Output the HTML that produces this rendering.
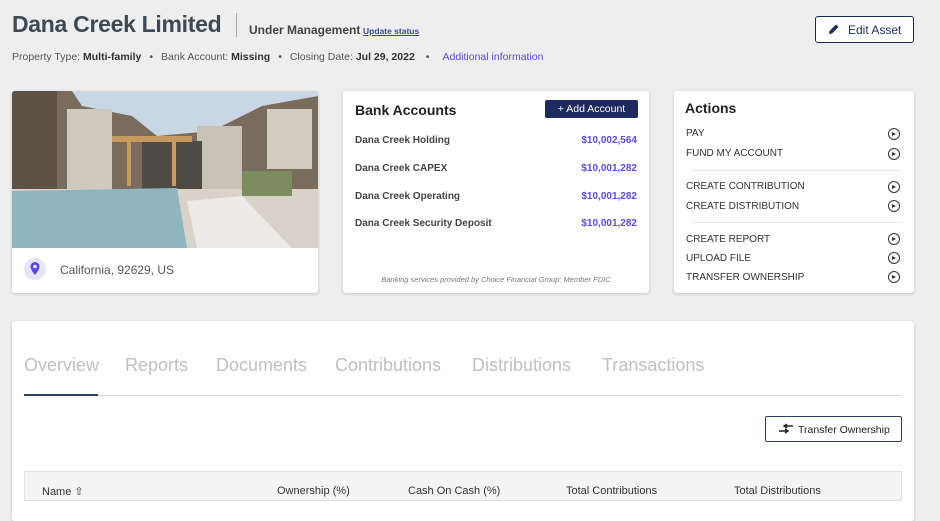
<!DOCTYPE html>
<html><head><style>
*{margin:0;padding:0;box-sizing:border-box}
body{width:940px;height:492px;overflow:hidden;background:#eeeeee;font-family:"Liberation Sans",sans-serif;position:relative;color:#333}
.a{position:absolute;white-space:nowrap}
.card{position:absolute;background:#fff;border-radius:3px;box-shadow:0 1px 3px rgba(0,0,0,.18)}
.ba{position:absolute;left:12px;font-size:10px;font-weight:bold;color:#444}
.amt{position:absolute;right:12px;font-size:10px;font-weight:bold;color:#5a4be0}
.act{position:absolute;left:12px;font-size:10px;color:#333}
.ic{position:absolute;right:14px;width:12px;height:12px;border:1.3px solid #333;border-radius:50%}
.ic:after{content:"";position:absolute;left:3px;top:3px;border-left:4px solid #333;border-top:2.2px solid transparent;border-bottom:2.2px solid transparent}
.sep{position:absolute;left:18px;right:12px;height:1px;background:#e6e6e6}
.tab{position:absolute;top:355px;font-size:18px;color:#c0c0c0}
</style></head><body>
<div class="a" style="left:12px;top:11px;font-size:23px;font-weight:bold;color:#3d4a55;letter-spacing:-0.3px">Dana Creek Limited</div>
<div class="a" style="left:236px;top:13px;width:1px;height:24px;background:#aaa"></div>
<div class="a" style="left:249px;top:23px;font-size:12px;font-weight:bold;color:#444">Under Management</div>
<div class="a" style="left:363px;top:26px;font-size:8.5px;font-weight:bold;color:#3a4a9a;text-decoration:underline">Update status</div>
<div class="a" style="left:12px;top:51px;font-size:10.5px;color:#555">Property Type: <b style="color:#333">Multi-family</b><span style="margin:0 8px">•</span>Bank Account: <b style="color:#333">Missing</b><span style="margin:0 8px">•</span>Closing Date: <b style="color:#333">Jul 29, 2022</b><span style="margin:0 13px 0 11px">•</span><span style="color:#5a4be0">Additional information</span></div>
<div class="a" style="left:815px;top:16px;width:99px;height:27px;border:1px solid #1e2a55;border-radius:3px;background:#fff;font-size:12px;color:#1e2a55;padding:6px 0 0 32px">Edit Asset</div>
<svg class="a" style="left:828px;top:23px" width="12" height="12" viewBox="0 0 12 12"><path d="M1 11l.5-3L8 1.5l2.5 2.5L4 10.5z" fill="#1e2a55"/></svg>

<div class="card" style="left:12px;top:91px;width:306px;height:202px;overflow:hidden">
<svg width="306" height="157" viewBox="0 0 306 157">
<rect width="306" height="157" fill="#c9d6e4"/>
<polygon points="0,0 60,0 70,15 120,25 145,45 200,40 250,15 306,5 306,110 0,110" fill="#7a6c5c"/>
<rect x="55" y="18" width="45" height="80" fill="#cfc9be"/>
<rect x="185" y="35" width="45" height="65" fill="#c8c1b5"/>
<rect x="255" y="18" width="45" height="60" fill="#d2ccc0"/>
<rect x="0" y="0" width="45" height="105" fill="#5e5246"/>
<rect x="130" y="50" width="60" height="50" fill="#4e4a44"/>
<rect x="100" y="45" width="80" height="6" fill="#c89a60"/>
<rect x="115" y="50" width="4" height="45" fill="#c89a60"/><rect x="160" y="50" width="4" height="45" fill="#c89a60"/>
<rect x="0" y="98" width="306" height="59" fill="#d8d2c8"/>
<rect x="230" y="80" width="50" height="25" fill="#7d8c5e"/>
<polygon points="0,100 165,97 175,157 0,157" fill="#8fb5bf"/>
<polygon points="175,110 230,105 280,157 185,157" fill="#eceae6"/>
</svg>
<div class="a" style="left:12px;top:167px;width:22px;height:22px;border-radius:50%;background:#e6e4f5"></div>
<svg class="a" style="left:18px;top:171px" width="10" height="13" viewBox="0 0 10 13"><path d="M5 0a4.5 4.5 0 0 0-4.5 4.5C.5 8 5 13 5 13s4.5-5 4.5-8.5A4.5 4.5 0 0 0 5 0zm0 6.3a1.8 1.8 0 1 1 0-3.6 1.8 1.8 0 0 1 0 3.6z" fill="#5a4be0"/></svg>
<div class="a" style="left:48px;top:172px;font-size:12px;color:#555">California, 92629, US</div>
</div>

<div class="card" style="left:343px;top:91px;width:306px;height:202px">
<div class="a" style="left:12px;top:11px;font-size:14px;font-weight:bold;color:#222">Bank Accounts</div>
<div class="a" style="left:202px;top:9px;width:93px;height:18px;background:#1e2a5e;border-radius:2px;color:#fff;font-size:10.5px;text-align:center;line-height:18px">+ Add Account</div>
<div class="ba" style="top:44px">Dana Creek Holding</div><div class="amt" style="top:44px">$10,002,564</div>
<div class="ba" style="top:72px">Dana Creek CAPEX</div><div class="amt" style="top:72px">$10,001,282</div>
<div class="ba" style="top:100px">Dana Creek Operating</div><div class="amt" style="top:100px">$10,001,282</div>
<div class="ba" style="top:127px">Dana Creek Security Deposit</div><div class="amt" style="top:127px">$10,001,282</div>
<div class="a" style="left:0;width:306px;top:184px;font-size:7.5px;font-style:italic;color:#777;text-align:center">Banking services provided by Choice Financial Group; Member FDIC</div>
</div>

<div class="card" style="left:674px;top:91px;width:240px;height:202px">
<div class="a" style="left:11px;top:9px;font-size:14px;font-weight:bold;color:#222">Actions</div>
<div class="act" style="top:37px">PAY</div><div class="ic" style="top:37px"></div>
<div class="act" style="top:57px">FUND MY ACCOUNT</div><div class="ic" style="top:57px"></div>
<div class="sep" style="top:79px"></div>
<div class="act" style="top:90px">CREATE CONTRIBUTION</div><div class="ic" style="top:90px"></div>
<div class="act" style="top:110px">CREATE DISTRIBUTION</div><div class="ic" style="top:109px"></div>
<div class="sep" style="top:131px"></div>
<div class="act" style="top:143px">CREATE REPORT</div><div class="ic" style="top:142px"></div>
<div class="act" style="top:162px">UPLOAD FILE</div><div class="ic" style="top:161px"></div>
<div class="act" style="top:181px">TRANSFER OWNERSHIP</div><div class="ic" style="top:180px"></div>
</div>

<div class="card" style="left:12px;top:321px;width:902px;height:200px"></div>
<div class="tab" style="left:24px">Overview</div>
<div class="tab" style="left:125px">Reports</div>
<div class="tab" style="left:216px">Documents</div>
<div class="tab" style="left:335px">Contributions</div>
<div class="tab" style="left:472px">Distributions</div>
<div class="tab" style="left:602px">Transactions</div>
<div class="a" style="left:24px;top:395px;width:878px;height:1px;background:#d8d8dc"></div>
<div class="a" style="left:24px;top:394px;width:74px;height:2px;background:#2e3f6e"></div>
<div class="a" style="left:765px;top:416px;width:137px;height:26px;border:1px solid #2e3f6e;border-radius:2px;font-size:10.5px;color:#222;padding:7px 0 0 32px">Transfer Ownership</div>
<svg class="a" style="left:778px;top:423px" width="16" height="11" viewBox="0 0 16 11"><path d="M6 3h9M9 1L6 3l3 2M1 8h9M7 6l3 2-3 2" stroke="#222" stroke-width="1.4" fill="none"/></svg>
<div class="a" style="left:24px;top:471px;width:878px;height:30px;background:#f4f4f4;border:1px solid #e0e0e0"></div>
<div class="a" style="left:42px;top:485px;font-size:11px;color:#333">Name ⇧</div>
<div class="a" style="left:277px;top:485px;font-size:11px;color:#333">Ownership (%)</div>
<div class="a" style="left:408px;top:485px;font-size:11px;color:#333">Cash On Cash (%)</div>
<div class="a" style="left:566px;top:485px;font-size:11px;color:#333">Total Contributions</div>
<div class="a" style="left:734px;top:485px;font-size:11px;color:#333">Total Distributions</div>
</body></html>
